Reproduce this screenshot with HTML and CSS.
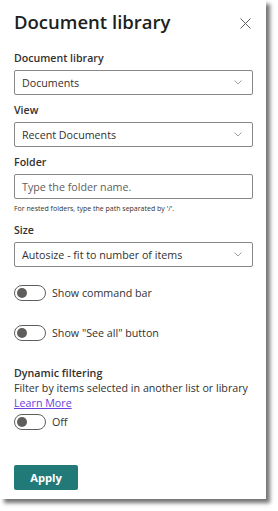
FILE: index.html
```html
<!DOCTYPE html>
<html>
<head>
<meta charset="utf-8">
<link rel="stylesheet" href="styles.css">
</head>
<body>
<div class="panel">
  <div class="header">
    <h1 class="title">Document library</h1>
    <svg class="close" width="11" height="11" viewBox="0 0 11 11"><path d="M0.5 0.5 L10.5 10.5 M10.5 0.5 L0.5 10.5" stroke="#605e5c" stroke-width="1" fill="none"/></svg>
  </div>

  <div class="field">
    <div class="label">Document library</div>
    <div class="dropdown"><span>Documents</span><svg class="chev" width="8" height="5" viewBox="0 0 8 5"><path d="M0.5 0.5 L4 4 L7.5 0.5" stroke="#a19f9d" fill="none"/></svg></div>
  </div>

  <div class="field">
    <div class="label">View</div>
    <div class="dropdown"><span>Recent Documents</span><svg class="chev" width="8" height="5" viewBox="0 0 8 5"><path d="M0.5 0.5 L4 4 L7.5 0.5" stroke="#a19f9d" fill="none"/></svg></div>
  </div>

  <div class="field">
    <div class="label">Folder</div>
    <div class="input"><span class="placeholder">Type the folder name.</span></div>
    <div class="help">For nested folders, type the path separated by '/'.</div>
  </div>

  <div class="field">
    <div class="label">Size</div>
    <div class="dropdown"><span>Autosize - fit to number of items</span><svg class="chev" width="8" height="5" viewBox="0 0 8 5"><path d="M0.5 0.5 L4 4 L7.5 0.5" stroke="#a19f9d" fill="none"/></svg></div>
  </div>

  <div class="toggle-row first">
    <span class="toggle"><span class="knob"></span></span>
    <span class="toggle-text">Show command bar</span>
  </div>

  <div class="toggle-row second">
    <span class="toggle"><span class="knob"></span></span>
    <span class="toggle-text">Show "See all" button</span>
  </div>

  <div class="dynamic">
    <div class="dyn-label">Dynamic filtering</div>
    <div class="dyn-desc">Filter by items selected in another list or library</div>
    <a class="learn" href="#">Learn More</a>
    <div class="toggle-row off">
      <span class="toggle"><span class="knob"></span></span>
      <span class="toggle-text">Off</span>
    </div>
  </div>

  <button class="apply">Apply</button>
</div>
</body>
</html>
```

FILE: styles.css
```css
* { box-sizing: border-box; }
html, body { margin: 0; padding: 0; background: #ffffff; }
body {
  width: 278px;
  height: 511px;
  font-family: "Open Sans", "Noto Sans", sans-serif;
  color: #323130;
}
.panel {
  width: 266px;
  height: 499px;
  background: #ffffff;
  box-shadow: 4px 4px 4px rgba(0, 0, 0, 0.55);
  padding: 10px 13px 0 14px;
  display: flex;
  flex-direction: column;
}
.header {
  display: flex;
  align-items: center;
  justify-content: space-between;
  height: 24px;
  margin-bottom: 14px;
}
.title {
  margin: 0;
  font-size: 18.5px;
  font-weight: 600;
  line-height: 24px;
  color: #201f1e;
}
.close { margin-right: 2px; margin-top: 2px; }
.field { display: flex; flex-direction: column; margin-bottom: 5px; }
.label {
  font-size: 10.6px;
  font-weight: 600;
  line-height: 20px;
  margin-bottom: 2px;
  color: #323130;
}
.dropdown, .input {
  height: 25px;
  border: 1px solid #8a8886;
  border-radius: 2px;
  display: flex;
  align-items: center;
  justify-content: space-between;
  padding: 0 10px 0 7px;
  font-size: 10.7px;
  color: #323130;
}
.chev { flex: none; }
.placeholder { color: #605e5c; }
.help {
  font-size: 7px;
  line-height: 12px;
  margin-top: 4px;
  color: #323130;
}
.toggle-row {
  display: flex;
  align-items: center;
  height: 20px;
}
.toggle-row.first { margin-top: 11px; }
.toggle-row.second { margin-top: 20px; }
.toggle {
  width: 32px;
  height: 16px;
  border: 1px solid #605e5c;
  border-radius: 8px;
  display: flex;
  align-items: center;
  padding-left: 2px;
  flex: none;
}
.knob {
  width: 10px;
  height: 10px;
  border-radius: 50%;
  background: #605e5c;
}
.toggle-text {
  font-size: 10.7px;
  margin-left: 6px;
  color: #323130;
}
.dynamic { margin-top: 23px; display: flex; flex-direction: column; }
.dyn-label { font-size: 10.7px; font-weight: 600; line-height: 15px; }
.dyn-desc { font-size: 10.7px; line-height: 15px; white-space: nowrap; }
.learn {
  font-size: 10.7px;
  line-height: 15px;
  color: #6b3fe0;
  text-decoration: underline;
  align-self: flex-start;
}
.toggle-row.off { margin-top: 1px; }
.apply {
  margin-top: 33px;
  align-self: flex-start;
  width: 64px;
  height: 25px;
  background: #217a78;
  border: none;
  border-radius: 2px;
  color: #ffffff;
  font-family: "Open Sans", "Noto Sans", sans-serif;
  font-size: 11.2px;
  font-weight: 700;
  padding: 0;
}
```
